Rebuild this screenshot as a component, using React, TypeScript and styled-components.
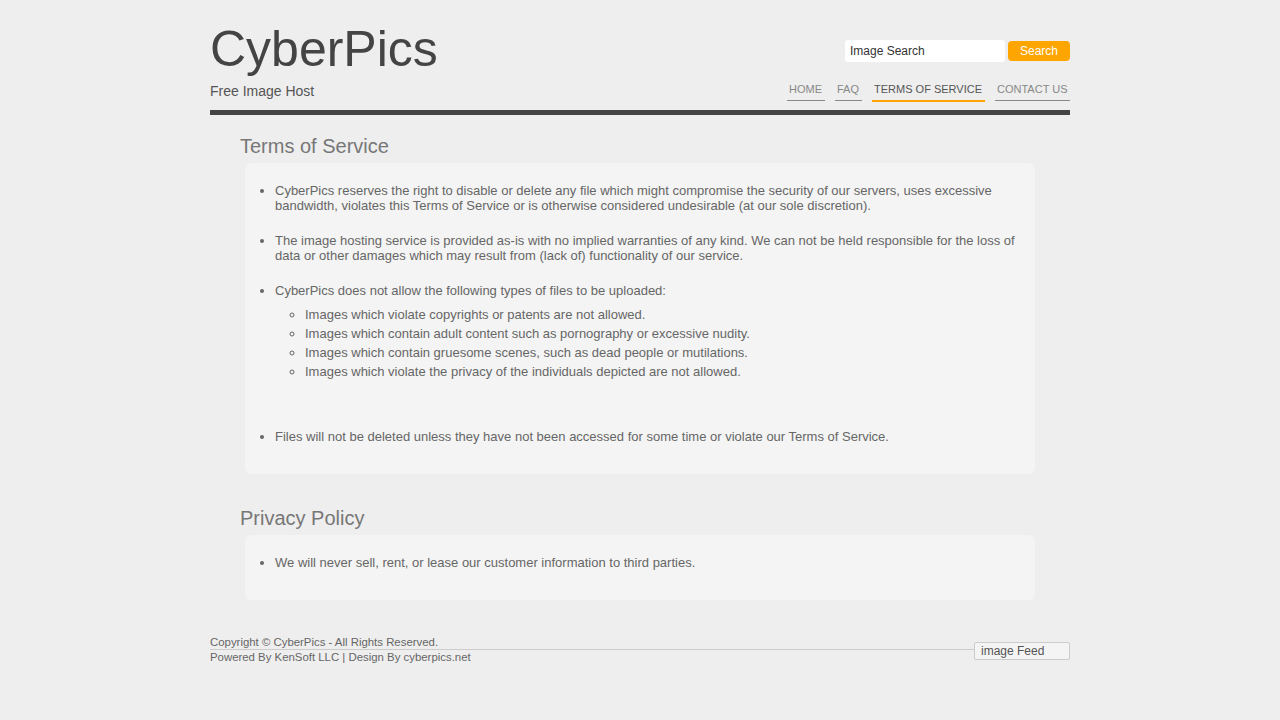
import React from "react";
import styled, { createGlobalStyle } from "styled-components";

const Global = createGlobalStyle`
  html, body { margin: 0; padding: 0; background: #eeeeee; }
  body { font-family: "Liberation Sans", Arial, sans-serif; color: #666; }
  * { box-sizing: border-box; }
`;

const Page = styled.div`
  width: 860px;
  margin: 0 auto;
  padding-bottom: 40px;
`;

const Header = styled.header`
  display: flex;
  justify-content: space-between;
  padding-top: 21px;
`;

const Brand = styled.div`
  display: flex;
  flex-direction: column;
`;

const Title = styled.h1`
  margin: 0;
  font-size: 50px;
  line-height: 56px;
  font-weight: normal;
  color: #444;
`;

const Tagline = styled.div`
  margin-top: 6px;
  font-size: 14px;
  line-height: 16px;
  color: #555;
`;

const RightCol = styled.div`
  display: flex;
  flex-direction: column;
  align-items: flex-end;
  padding-top: 19px;
`;

const SearchForm = styled.form`
  display: flex;
  align-items: center;
  gap: 3px;
  height: 22px;
  margin: 0;
`;

const SearchInput = styled.input`
  width: 160px;
  height: 22px;
  border: none;
  border-radius: 3px;
  background: #fff;
  padding: 0 5px;
  font-family: "Liberation Sans", Arial, sans-serif;
  font-size: 12px;
  color: #333;
  outline: none;
`;

const SearchButton = styled.button`
  width: 62px;
  height: 20px;
  border: none;
  border-radius: 4px;
  background: #ffa500;
  color: #fff;
  font-family: "Liberation Sans", Arial, sans-serif;
  font-size: 12px;
  padding: 0;
  cursor: pointer;
`;

const Nav = styled.nav`
  display: flex;
  align-items: flex-start;
  gap: 10px;
  margin-top: 21px;
`;

const NavItem = styled.a<{ $active?: boolean }>`
  display: block;
  font-size: 11px;
  line-height: 13px;
  padding: 0 2.5px 4px;
  text-transform: uppercase;
  text-decoration: none;
  color: ${(p) => (p.$active ? "#555" : "#888")};
  border-bottom: ${(p) => (p.$active ? "2px solid #ffa500" : "1px solid #888")};
`;

const Bar = styled.div`
  height: 5px;
  background: #444;
  margin-top: 8px;
`;

const Content = styled.main`
  padding: 0 35px 0 30px;
`;

const SectionTitle = styled.h2<{ $gap: number }>`
  margin: ${(p) => p.$gap}px 0 5px;
  font-size: 20px;
  line-height: 24px;
  font-weight: normal;
  color: #777;
`;

const Box = styled.div`
  margin-left: 5px;
  background: #f4f4f4;
  border-radius: 7px;
  padding: 20px 15px 10px 0;
`;

const List = styled.ul`
  margin: 0;
  padding-left: 30px;
  list-style: disc;
  font-size: 13px;
  line-height: 15px;
  color: #666;
`;

const Item = styled.li`
  margin-bottom: 20px;
`;

const SubList = styled.ul`
  margin: 7px 0 48px;
  padding-left: 30px;
  list-style: circle;
`;

const SubItem = styled.li`
  line-height: 19px;
`;

const Footer = styled.footer`
  display: grid;
  grid-template-columns: 1fr 96px;
  margin-top: 35px;
  font-size: 11.4px;
  line-height: 15px;
  color: #666;
`;

const FooterText = styled.div`
  grid-area: 1 / 1;
`;

const FooterRule = styled.div`
  grid-area: 1 / 1;
  align-self: start;
  margin-top: 14px;
  height: 1px;
  background: #ccc;
`;

const Feed = styled.div`
  grid-area: 1 / 2;
  align-self: start;
  margin-top: 7px;
  height: 18px;
  border: 1px solid #ccc;
  border-radius: 2px;
  background: #f4f4f4;
  padding: 0 6px;
  font-size: 12px;
  line-height: 16px;
  color: #555;
`;

export default function App() {
  return (
    <>
      <Global />
      <Page>
        <Header>
          <Brand>
            <Title>CyberPics</Title>
            <Tagline>Free Image Host</Tagline>
          </Brand>
          <RightCol>
            <SearchForm onSubmit={(e) => e.preventDefault()}>
              <SearchInput defaultValue="Image Search" />
              <SearchButton type="submit">Search</SearchButton>
            </SearchForm>
            <Nav>
              <NavItem href="#">Home</NavItem>
              <NavItem href="#">FAQ</NavItem>
              <NavItem href="#" $active>
                Terms of Service
              </NavItem>
              <NavItem href="#">Contact Us</NavItem>
            </Nav>
          </RightCol>
        </Header>
        <Bar />
        <Content>
          <SectionTitle $gap={19}>Terms of Service</SectionTitle>
          <Box>
            <List>
              <Item>
                CyberPics reserves the right to disable or delete any file which might compromise the security of our
                servers, uses excessive bandwidth, violates this Terms of Service or is otherwise considered undesirable
                (at our sole discretion).
              </Item>
              <Item>
                The image hosting service is provided as-is with no implied warranties of any kind. We can not be held
                responsible for the loss of data or other damages which may result from (lack of) functionality of our
                service.
              </Item>
              <Item>
                CyberPics does not allow the following types of files to be uploaded:
                <SubList>
                  <SubItem>Images which violate copyrights or patents are not allowed.</SubItem>
                  <SubItem>Images which contain adult content such as pornography or excessive nudity.</SubItem>
                  <SubItem>Images which contain gruesome scenes, such as dead people or mutilations.</SubItem>
                  <SubItem>Images which violate the privacy of the individuals depicted are not allowed.</SubItem>
                </SubList>
              </Item>
              <Item>
                Files will not be deleted unless they have not been accessed for some time or violate our Terms of
                Service.
              </Item>
            </List>
          </Box>
          <SectionTitle $gap={32}>Privacy Policy</SectionTitle>
          <Box>
            <List>
              <Item>We will never sell, rent, or lease our customer information to third parties.</Item>
            </List>
          </Box>
        </Content>
        <Footer>
          <FooterRule />
          <FooterText>
            Copyright © CyberPics - All Rights Reserved.
            <br />
            Powered By KenSoft LLC | Design By cyberpics.net
          </FooterText>
          <Feed>image Feed</Feed>
        </Footer>
      </Page>
    </>
  );
}
